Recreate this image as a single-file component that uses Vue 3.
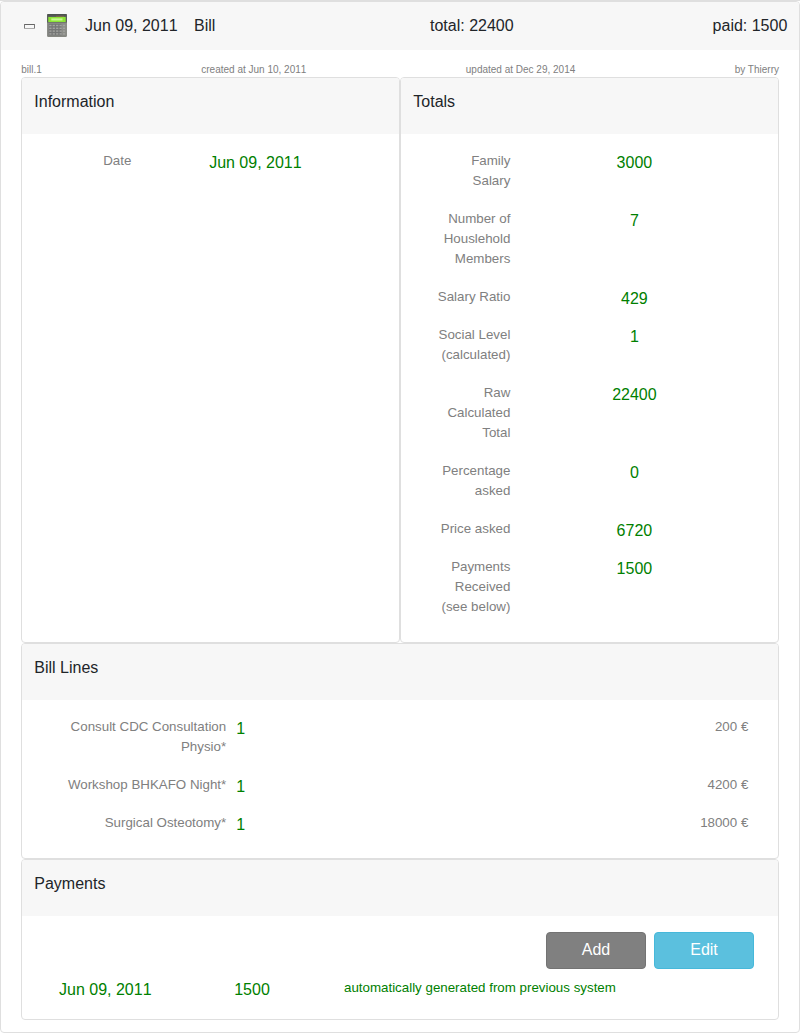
<script setup>
const totals = [
  { lines: ['Family', 'Salary'], value: '3000' },
  { lines: ['Number of', 'Houslehold', 'Members'], value: '7' },
  { lines: ['Salary Ratio'], value: '429' },
  { lines: ['Social Level', '(calculated)'], value: '1' },
  { lines: ['Raw', 'Calculated', 'Total'], value: '22400' },
  { lines: ['Percentage', 'asked'], value: '0' },
  { lines: ['Price asked'], value: '6720' },
  { lines: ['Payments', 'Received', '(see below)'], value: '1500' },
]
const billLines = [
  { label: 'Consult CDC Consultation Physio*', qty: '1', price: '200 €' },
  { label: 'Workshop BHKAFO Night*', qty: '1', price: '4200 €' },
  { label: 'Surgical Osteotomy*', qty: '1', price: '18000 €' },
]
const keyRows = [11.6, 14.4, 17.2, 20]
const keyCols = [3.4, 6.8, 10.2, 13.6, 17]
</script>

<template>
  <div class="page">
    <main class="bill">
      <header class="bill-head">
        <svg class="toggle" width="11" height="5" viewBox="0 0 11 5">
          <path d="M0 .5H11" stroke="#666" />
          <path d="M.5 0V5M10.5 0V5" stroke="#777" />
          <path d="M0 4.5H11" stroke="#aaa" />
          <rect x="1" y="1" width="9" height="3" fill="#f7f7f7" />
        </svg>
        <svg class="calc" width="20" height="23" viewBox="0 0 20 23">
          <rect width="20" height="22.8" rx="1.2" fill="#8b8c87" />
          <path d="M1 0H19Q20 0 20 1V8.6H0V1Q0 0 1 0Z" fill="#5a5f5a" />
          <path d="M1 .9H19" stroke="#454a4a" />
          <path d="M9 2.3H17" stroke="#8a6d4a" stroke-width=".9" />
          <rect x="1.3" y="3" width="17.4" height="5" fill="#8ce435" />
          <rect x="4.3" y="4.4" width="11.2" height="2.1" fill="#c8f992" />
          <rect x="1.6" y="9.8" width="12.8" height="11.6" fill="#747675" />
          <template v-for="y in keyRows" :key="y">
            <rect v-for="x in keyCols" :key="x" :x="x - 1.1" :y="y - .8" width="2.2" height="1.4" fill="#a2a3a0" />
          </template>
          <path d="M.6 22.4H19.4" stroke="#74756f" stroke-width=".7" />
        </svg>
        <span class="date">Jun 09, 2011</span>
        <span class="kind">Bill</span>
        <span class="total">total: 22400</span>
        <span class="paid">paid: 1500</span>
      </header>

      <div class="bill-body">
        <div class="meta">
          <span>bill.1</span>
          <span class="date">created at Jun 10, 2011</span>
          <span>updated at Dec 29, 2014</span>
          <span>by Thierry</span>
        </div>

        <div class="columns">
          <section class="card">
            <h2>Information</h2>
            <div class="rows">
              <div class="row field">
                <div class="label">Date</div>
                <div class="value date">Jun 09, 2011</div>
              </div>
            </div>
          </section>
          <section class="card">
            <h2>Totals</h2>
            <div class="rows">
              <div v-for="t in totals" :key="t.lines[0]" class="row field">
                <div class="label">
                  <div v-for="l in t.lines" :key="l">{{ l }}</div>
                </div>
                <div class="value">{{ t.value }}</div>
              </div>
            </div>
          </section>
        </div>

        <section class="card">
          <h2>Bill Lines</h2>
          <div class="rows">
            <div v-for="b in billLines" :key="b.label" class="row line">
              <div class="label">{{ b.label }}</div>
              <div class="value">{{ b.qty }}</div>
              <div class="label">{{ b.price }}</div>
            </div>
          </div>
        </section>

        <section class="card payments">
          <h2>Payments</h2>
          <div class="actions">
            <button class="add">Add</button>
            <button class="edit">Edit</button>
          </div>
          <div class="payment">
            <span class="value date">Jun 09, 2011</span>
            <span class="value">1500</span>
            <span class="note">automatically generated from previous system</span>
          </div>
        </section>
      </div>
    </main>
  </div>
</template>

<style>
body {
  background: #fff;
}
</style>

<style scoped>
* {
  box-sizing: border-box;
}
.page {
  width: 800px;
  height: 1033px;
  border-top: 1px solid #dfdfdf;
  font: 16px/24px "Liberation Sans", Arial, sans-serif;
  color: #212529;
}
.date {
  font-kerning: none;
}
.bill {
  height: 1032px;
  border: 1px solid #dfdfdf;
  border-radius: 4px;
  overflow: hidden;
}
.bill-head {
  display: grid;
  grid-template-columns: 23px 38px 109px 236px 1fr auto;
  align-items: center;
  height: 48px;
  padding: 0 11.7px 0 23px;
  background: #f7f7f7;
}
.calc {
  margin-bottom: 2px;
}
.bill-body {
  padding: 12px 20px;
}
.meta {
  display: flex;
  justify-content: space-between;
  height: 15px;
  padding-left: 0.3px;
  font-size: 10px;
  line-height: 15px;
  color: gray;
}
.columns {
  display: grid;
  grid-template-columns: 1fr 1fr;
  height: 566px;
}
.card {
  border: 1px solid #dfdfdf;
  border-radius: 4px;
  overflow: hidden;
}
h2 {
  height: 56px;
  margin: 0;
  padding: 12px 12.3px;
  background: #f7f7f7;
  font: inherit;
}
.rows {
  padding: 17px 0 7px;
}
.row {
  display: grid;
  margin-bottom: 18px;
}
.field {
  grid-template-columns: 109.4px 248px;
}
.line {
  grid-template-columns: 164.2px 1fr auto;
  column-gap: 10px;
  padding: 0 29.7px 0 40px;
}
.label {
  font-size: 13.333px;
  line-height: 20px;
  text-align: right;
  color: gray;
}
.value {
  height: 20px;
  color: green;
}
.field .value {
  text-align: center;
}
.payments {
  height: 161px;
}
.actions {
  display: flex;
  justify-content: flex-end;
  gap: 8px;
  padding: 16px 24px 9px;
}
button {
  width: 100px;
  height: 37px;
  padding: 0 0 2px;
  border: 1px solid;
  border-radius: 4px;
  font: inherit;
  color: #fff;
}
.add {
  background: gray;
  border-color: #737373;
}
.edit {
  background: #5bc0de;
  border-color: #46b8da;
}
.payment {
  display: grid;
  grid-template-columns: 175.2px 109.8px 1fr;
  padding-left: 37px;
}
.note {
  font-size: 13.333px;
  line-height: 20px;
  color: green;
}
</style>
